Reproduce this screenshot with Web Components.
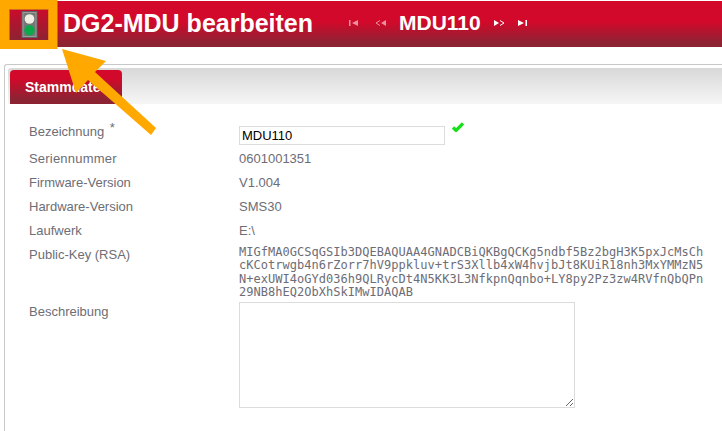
<!DOCTYPE html>
<html lang="de">
<head>
<meta charset="utf-8">
<title>DG2-MDU bearbeiten</title>
<style>
  html, body { margin: 0; height: 100%; overflow: hidden; background: #fff; }
  body { font: 13px "Liberation Sans", Arial, sans-serif; position: relative; }
</style>
</head>
<body>
<page-header title-text="DG2-MDU bearbeiten" device="MDU110"></page-header>
<tab-panel tab="Stammdaten">
  <form-row label="Bezeichnung" required>
    <text-field value="MDU110"></text-field>
  </form-row>
  <form-row label="Seriennummer" spacing=".2px">0601001351</form-row>
  <form-row label="Firmware-Version">V1.004</form-row>
  <form-row label="Hardware-Version">SMS30</form-row>
  <form-row label="Laufwerk">E:\</form-row>
  <form-row label="Public-Key (RSA)">
    <key-block>MIGfMA0GCSqGSIb3DQEBAQUAA4GNADCBiQKBgQCKg5ndbf5Bz2bgH3K5pxJcMsCh
cKCotrwgb4n6rZorr7hV9ppkluv+trS3Xllb4xW4hvjbJt8KUiR18nh3MxYMMzN5
N+exUWI4oGYd036h9QLRycDt4N5KK3L3NfkpnQqnbo+LY8py2Pz3zw4RVfnQbQPn
29NB8hEQ2ObXhSkIMwIDAQAB</key-block>
  </form-row>
  <form-row label="Beschreibung">
    <area-field></area-field>
  </form-row>
</tab-panel>
<arrow-callout></arrow-callout>

<script>
// Kopfzeile mit Ampel, Titel und Blaettern
class PageHeader extends HTMLElement {
  constructor() {
    super();
    this.attachShadow({ mode: 'open' });
    this.render();
  }

  render() {
    const title = this.getAttribute('title-text');
    const device = this.getAttribute('device');
    this.shadowRoot.innerHTML = `
      <style>
        :host {
          display: flex;
          align-items: center;
          height: 46px;
          margin-top: 1px;
          padding-left: 9px;
          background: linear-gradient(#d2092a 45%, #8c2333 92%);
          color: #fff;
          font-family: "Liberation Sans", Arial, sans-serif;
          font-weight: bold;
        }
        .light {
          display: flex;
          justify-content: center;
          align-items: center;
          align-self: flex-start;
          width: 38px;
          height: 30px;
          margin-top: 8px;
          border: 1px solid #d2691e;
          background: linear-gradient(#c90c2c, #8c2333);
        }
        h1 {
          margin: -1px 0 0 14px;
          width: 286px;
          font-size: 25px;
          font-weight: bold;
          white-space: nowrap;
        }
        .pager { display: flex; align-items: center; margin-top: -3px; }
        .pager svg { display: block; }
        .device { font-size: 21px; margin: 0 13px; }
        .first { margin-right: 17px; }
        .next { margin-right: 13px; }
      </style>
      <div class="light">
        <svg width="18" height="28" viewBox="0 0 18 28">
          <rect x="2" y="0.5" width="15" height="26" fill="#9a9d9a" stroke="#5f6264"/>
          <rect x="3.500" y="2" width="12" height="23" fill="#757876"/>
          <circle cx="9.500" cy="8" r="4.800" fill="#f1efe3"/>
          <circle cx="9.500" cy="19.300" r="5.200" fill="#0ca84c"/>
        </svg>
      </div>
      <h1>${title}</h1>
      <div class="pager">
        <svg class="first" width="9" height="6" viewBox="0 0 9 6" opacity=".55">
          <path d="M0 0h1.500v6H0zM9 0v6L3 3z" fill="#fff"/>
        </svg>
        <svg width="11" height="6" viewBox="0 0 11 6" opacity=".55">
          <path d="M11 0v6L6 3z" fill="#fff"/>
          <path d="M5 .5L1 3l4 2.500" fill="none" stroke="#fff"/>
        </svg>
        <span class="device">${device}</span>
        <svg class="next" width="11" height="6" viewBox="0 0 11 6">
          <path d="M0 0v6l5-3z" fill="#fff"/>
          <path d="M6 .5L10 3 6 5.500" fill="none" stroke="#fff"/>
        </svg>
        <svg width="9" height="6" viewBox="0 0 9 6">
          <path d="M0 0v6l6-3zM7.500 0H9v6H7.500z" fill="#fff"/>
        </svg>
      </div>
    `;
  }
}

// Rahmen mit Reiterleiste
class TabPanel extends HTMLElement {
  constructor() {
    super();
    this.attachShadow({ mode: 'open' });
    this.render();
  }

  render() {
    this.shadowRoot.innerHTML = `
      <style>
        :host {
          display: block;
          margin: 17px 0 0 4px;
          padding: 3px 0 0 3px;
          height: 367px;
          box-sizing: border-box;
          border: solid #c8c8c8;
          border-width: 1px 0 0 1px;
          border-top-left-radius: 3px;
        }
        .bar {
          display: flex;
          align-items: flex-end;
          height: 36px;
          border-top-left-radius: 3px;
          background: linear-gradient(#d8d8d8, #f6f6f6);
        }
        .tab {
          box-sizing: border-box;
          width: 112px;
          height: 34px;
          margin: 0 0 0 2px;
          padding: 9px 0 0 15px;
          border-radius: 4px 4px 0 0;
          background: linear-gradient(#d2092a 25%, #8c2333 85%);
          color: #fff;
          font-size: 14px;
          font-weight: bold;
          white-space: nowrap;
        }
        .body {
          display: grid;
          grid-template-columns: 1fr;
          padding: 16px 0 0 21px;
        }
      </style>
      <div class="bar"><div class="tab">${this.getAttribute('tab')}</div></div>
      <div class="body"><slot></slot></div>
    `;
  }
}

// Eine Zeile im Formular
class FormRow extends HTMLElement {
  constructor() {
    super();
    this.attachShadow({ mode: 'open' });
    this.render();
  }

  render() {
    const star = this.hasAttribute('required') ? '<sup>*</sup>' : '';
    const spacing = this.getAttribute('spacing') || 'normal';
    this.shadowRoot.innerHTML = `
      <style>
        :host {
          display: grid;
          grid-template-columns: 210px 1fr;
          min-height: 24px;
          color: #6d6d76;
          font-size: 13px;
          line-height: 24px;
        }
        sup { font-size: 13px; line-height: 0; margin-left: 2px; vertical-align: 4px; }
        .label { white-space: nowrap; letter-spacing: ${spacing}; }
      </style>
      <div class="label">${this.getAttribute('label')} ${star}</div>
      <div class="value"><slot></slot></div>
    `;
  }
}

// Eingabefeld mit gruenem Haken
class TextField extends HTMLElement {
  constructor() {
    super();
    this.attachShadow({ mode: 'open' });
    this.render();
  }

  render() {
    this.shadowRoot.innerHTML = `
      <style>
        :host { display: flex; align-items: flex-start; height: 27px; }
        input {
          box-sizing: border-box;
          width: 206px;
          height: 19px;
          margin: 6px 0 0;
          padding: 0 2px;
          border: 1px solid #dcdcdc;
          outline: none;
          color: #000;
          font: 13px "Liberation Sans", Arial, sans-serif;
        }
        svg { margin: 2px 0 0 7px; }
      </style>
      <input type="text" value="${this.getAttribute('value')}">
      <svg width="12" height="10" viewBox="0 0 12 10">
        <path d="M1 5.500l3 3 7-7" fill="none" stroke="#18e018" stroke-width="3.200"/>
      </svg>
    `;
  }
}

// Schluessel in Festbreitenschrift
class KeyBlock extends HTMLElement {
  constructor() {
    super();
    this.attachShadow({ mode: 'open' });
    this.shadowRoot.innerHTML = `
      <style>
        :host {
          display: block;
          padding: 3px 0 1px;
          font: 12px/13.3px "DejaVu Sans Mono", monospace;
          letter-spacing: .03px;
          color: #6d6d76;
        }
        div { white-space: pre; }
      </style>
      <div><slot></slot></div>
    `;
  }
}

class AreaField extends HTMLElement {
  constructor() {
    super();
    this.attachShadow({ mode: 'open' });
    this.shadowRoot.innerHTML = `
      <style>
        :host { display: block; margin: 2px 0 0; }
        textarea {
          display: block;
          box-sizing: border-box;
          width: 336px;
          height: 106px;
          margin: 0;
          border: 1px solid #dcdcdc;
          outline: none;
        }
      </style>
      <textarea></textarea>
    `;
  }
}

// Orangefarbene Markierung ueber dem Screenshot
class ArrowCallout extends HTMLElement {
  constructor() {
    super();
    this.attachShadow({ mode: 'open' });
    this.shadowRoot.innerHTML = `
      <style>
        :host { position: absolute; left: 0; top: 0; pointer-events: none; }
        svg { display: block; }
      </style>
      <svg width="170" height="145" viewBox="0 0 170 145">
        <path d="M4.500 4.500h48.500v40H4.500z" fill="none" stroke="#ffa800" stroke-width="9"/>
        <path d="M62 49l44 12-11 11 61 56-5 7-63-55-12 13z" fill="#ffa800"/>
      </svg>
    `;
  }
}

customElements.define('page-header', PageHeader);
customElements.define('tab-panel', TabPanel);
customElements.define('form-row', FormRow);
customElements.define('text-field', TextField);
customElements.define('key-block', KeyBlock);
customElements.define('area-field', AreaField);
customElements.define('arrow-callout', ArrowCallout);
</script>
</body>
</html>
